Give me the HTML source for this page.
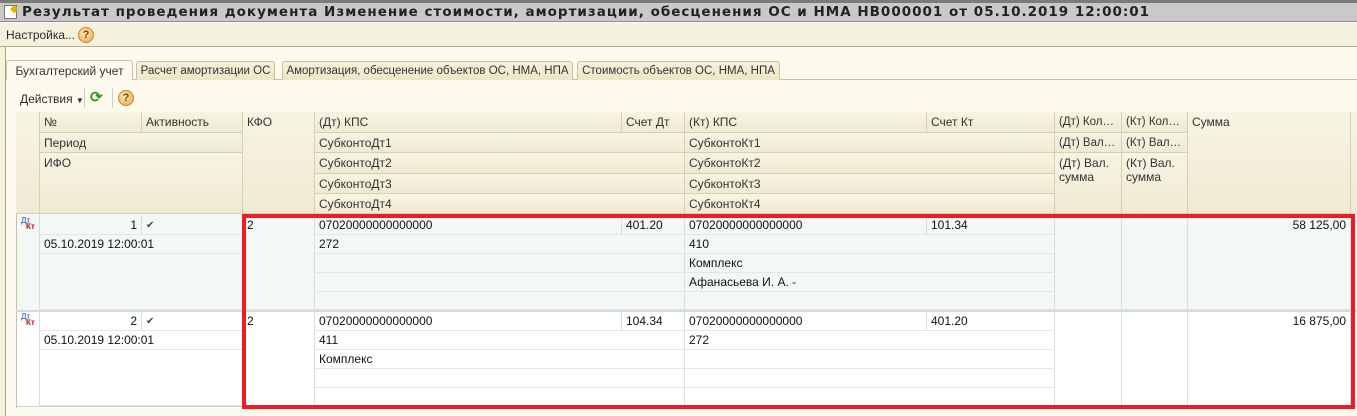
<!DOCTYPE html>
<html><head><meta charset="utf-8"><style>
*{margin:0;padding:0;box-sizing:border-box}
body{width:1357px;height:416px;overflow:hidden;background:#fdfbee;font:12px "Liberation Sans",sans-serif;color:#2a2a2a;position:relative}
.a{position:absolute;white-space:nowrap;overflow:hidden}
.h{position:absolute;background:linear-gradient(#f7f4e3,#efead2);border-right:1px solid #d6cfb4;border-bottom:1px solid #d6cfb4;padding:3px 4px;white-space:nowrap;text-overflow:ellipsis;overflow:hidden;line-height:14px;color:#333}
.w{white-space:normal}
.n{padding:3px 2px 3px 4px;font-size:11.5px}
.d{position:absolute;border-right:1px solid #d9dee4;border-bottom:1px solid #e3e7ea;padding:3px 4px;white-space:nowrap;overflow:hidden;line-height:13px;color:#111}
.r{text-align:right}
.tab{position:absolute;top:61px;height:19px;border:1px solid #c9c1a0;border-bottom:none;border-radius:3px 3px 0 0;background:linear-gradient(#f6f1da,#ece5c8);padding:3px 0 0 0;text-align:center;white-space:nowrap;overflow:hidden;font-size:12px;color:#333}
.q{position:absolute;width:16px;height:16px;border-radius:50%;background:radial-gradient(circle at 40% 35%,#fde7b4,#e8a446);border:1px solid #c58a2f;font:bold 11px "Liberation Sans";color:#7a4b10;text-align:center;line-height:14px}
</style></head><body>
<div class="a" style="left:0;top:0;width:1357px;height:3px;background:#7b7b7b"></div>
<div class="a" style="left:0;top:3px;width:1357px;height:19px;background:#c9c9c9;border-bottom:1px solid #8d8d8d"></div>
<div class="a" style="left:4px;top:5px;width:13px;height:14px;background:#fff;border:1px solid #777"></div>
<div class="a" style="left:10px;top:2px;color:#e9b000;font-size:11px">◆</div>
<div class="a" style="left:22px;top:4px;font:bold 13.5px 'DejaVu Sans',sans-serif;letter-spacing:1px;color:#222;line-height:16px">Результат проведения документа Изменение стоимости, амортизации, обесценения ОС и НМА НВ000001 от 05.10.2019 12:00:01</div>
<div class="a" style="left:0;top:23px;width:1357px;height:24px;background:#f4f1de;border-bottom:1px solid #b7ad8e"></div>
<div class="a" style="left:6px;top:28px">Настройка...</div>
<div class="q" style="left:78px;top:27px">?</div>
<div class="a" style="left:0;top:47px;width:6px;height:369px;background:#f4f1de;border-right:1px solid #a89f80"></div>
<div class="a" style="left:6px;top:79px;width:1351px;height:1px;background:#c9c1a0"></div>
<div class="tab" style="left:6px;width:127px;top:60px;height:20px;background:#fdfbee">Бухгалтерский учет</div>
<div class="tab" style="left:136px;width:139px;font-size:11.5px">Расчет амортизации ОС</div>
<div class="tab" style="left:282px;width:291px;font-size:11.5px">Амортизация, обесценение объектов ОС, НМА, НПА</div>
<div class="tab" style="left:577px;width:203px;font-size:11.5px">Стоимость объектов ОС, НМА, НПА</div>
<div class="a" style="left:20px;top:92px">Действия <span style="font-size:8px">▼</span></div>
<div class="a" style="left:84px;top:88px;width:1px;height:20px;background:#d5ceb2"></div>
<div class="a" style="left:90px;top:88px;color:#2a9a2a;font-size:15px;font-weight:bold">⟳</div>
<div class="a" style="left:112px;top:88px;width:1px;height:20px;background:#d5ceb2"></div>
<div class="q" style="left:118px;top:90px">?</div>
<div class="a" style="left:16px;top:112px;width:1341px;height:296px;background:#fff;border-top:1px solid #c9c1a0;border-left:1px solid #c9c1a0"></div>
<div class="h" style="left:16px;top:112px;width:24px;height:102px"></div>
<div class="h" style="left:40px;top:112px;width:102px;height:21px">№</div>
<div class="h" style="left:142px;top:112px;width:101px;height:21px">Активность</div>
<div class="h" style="left:40px;top:133px;width:203px;height:20px">Период</div>
<div class="h" style="left:40px;top:153px;width:203px;height:61px">ИФО</div>
<div class="h" style="left:243px;top:112px;width:72px;height:102px">КФО</div>
<div class="h" style="left:315px;top:112px;width:307px;height:21px">(Дт) КПС</div>
<div class="h" style="left:622px;top:112px;width:63px;height:21px">Счет Дт</div>
<div class="h" style="left:315px;top:133px;width:370px;height:20px">СубконтоДт1</div>
<div class="h" style="left:315px;top:153px;width:370px;height:21px">СубконтоДт2</div>
<div class="h" style="left:315px;top:174px;width:370px;height:20px">СубконтоДт3</div>
<div class="h" style="left:315px;top:194px;width:370px;height:20px">СубконтоДт4</div>
<div class="h" style="left:685px;top:112px;width:242px;height:21px">(Кт) КПС</div>
<div class="h" style="left:927px;top:112px;width:128px;height:21px">Счет Кт</div>
<div class="h" style="left:685px;top:133px;width:370px;height:20px">СубконтоКт1</div>
<div class="h" style="left:685px;top:153px;width:370px;height:21px">СубконтоКт2</div>
<div class="h" style="left:685px;top:174px;width:370px;height:20px">СубконтоКт3</div>
<div class="h" style="left:685px;top:194px;width:370px;height:20px">СубконтоКт4</div>
<div class="h n" style="left:1055px;top:112px;width:67px;height:21px">(Дт) Коли…</div>
<div class="h n" style="left:1055px;top:133px;width:67px;height:20px">(Дт) Валю…</div>
<div class="h w" style="left:1055px;top:153px;width:67px;height:61px">(Дт) Вал. сумма</div>
<div class="h n" style="left:1122px;top:112px;width:66px;height:21px">(Кт) Коли…</div>
<div class="h n" style="left:1122px;top:133px;width:66px;height:20px">(Кт) Валю…</div>
<div class="h w" style="left:1122px;top:153px;width:66px;height:61px">(Кт) Вал. сумма</div>
<div class="h" style="left:1188px;top:112px;width:163px;height:102px">Сумма</div>
<div class="h" style="left:1351px;top:112px;width:6px;height:102px"></div>
<div class="a" style="left:17px;top:214px;width:1340px;height:96px;background:#f3f8f5"></div>
<div class="a" style="left:17px;top:310px;width:1340px;height:96px;background:#fff"></div>
<div class="a" style="left:21px;top:216px;font-size:8px;color:#1d4fa0">Дт</div>
<div class="a" style="left:26px;top:222px;font-size:8px;font-weight:bold;color:#c01010">Кт</div>
<div class="a" style="left:21px;top:312px;font-size:8px;color:#1d4fa0">Дт</div>
<div class="a" style="left:26px;top:318px;font-size:8px;font-weight:bold;color:#c01010">Кт</div>
<div class="d r" style="left:40px;top:216px;width:102px;height:19px">1</div>
<div class="d" style="left:142px;top:216px;width:101px;height:19px;color:#444;font-size:10px">✔</div>
<div class="d" style="left:40px;top:235px;width:203px;height:19px">05.10.2019 12:00:01</div>
<div class="d" style="left:40px;top:254px;width:203px;height:56px"></div>
<div class="d" style="left:243px;top:216px;width:72px;height:94px">2</div>
<div class="d" style="left:315px;top:216px;width:307px;height:19px">07020000000000000</div>
<div class="d" style="left:622px;top:216px;width:63px;height:19px">401.20</div>
<div class="d" style="left:315px;top:235px;width:370px;height:19px">272</div>
<div class="d" style="left:315px;top:254px;width:370px;height:19px"></div>
<div class="d" style="left:315px;top:273px;width:370px;height:19px"></div>
<div class="d" style="left:315px;top:292px;width:370px;height:18px"></div>
<div class="d" style="left:685px;top:216px;width:242px;height:19px">07020000000000000</div>
<div class="d" style="left:927px;top:216px;width:128px;height:19px">101.34</div>
<div class="d" style="left:685px;top:235px;width:370px;height:19px">410</div>
<div class="d" style="left:685px;top:254px;width:370px;height:19px">Комплекс</div>
<div class="d" style="left:685px;top:273px;width:370px;height:19px">Афанасьева И. А. -</div>
<div class="d" style="left:685px;top:292px;width:370px;height:18px"></div>
<div class="d" style="left:1055px;top:216px;width:67px;height:94px"></div>
<div class="d" style="left:1122px;top:216px;width:66px;height:94px"></div>
<div class="d r" style="left:1188px;top:216px;width:163px;height:94px">58 125,00</div>
<div class="d r" style="left:40px;top:312px;width:102px;height:19px">2</div>
<div class="d" style="left:142px;top:312px;width:101px;height:19px;color:#444;font-size:10px">✔</div>
<div class="d" style="left:40px;top:331px;width:203px;height:19px">05.10.2019 12:00:01</div>
<div class="d" style="left:40px;top:350px;width:203px;height:56px"></div>
<div class="d" style="left:243px;top:312px;width:72px;height:94px">2</div>
<div class="d" style="left:315px;top:312px;width:307px;height:19px">07020000000000000</div>
<div class="d" style="left:622px;top:312px;width:63px;height:19px">104.34</div>
<div class="d" style="left:315px;top:331px;width:370px;height:19px">411</div>
<div class="d" style="left:315px;top:350px;width:370px;height:19px">Комплекс</div>
<div class="d" style="left:315px;top:369px;width:370px;height:19px"></div>
<div class="d" style="left:315px;top:388px;width:370px;height:18px"></div>
<div class="d" style="left:685px;top:312px;width:242px;height:19px">07020000000000000</div>
<div class="d" style="left:927px;top:312px;width:128px;height:19px">401.20</div>
<div class="d" style="left:685px;top:331px;width:370px;height:19px">272</div>
<div class="d" style="left:685px;top:350px;width:370px;height:19px"></div>
<div class="d" style="left:685px;top:369px;width:370px;height:19px"></div>
<div class="d" style="left:685px;top:388px;width:370px;height:18px"></div>
<div class="d" style="left:1055px;top:312px;width:67px;height:94px"></div>
<div class="d" style="left:1122px;top:312px;width:66px;height:94px"></div>
<div class="d r" style="left:1188px;top:312px;width:163px;height:94px">16 875,00</div>
<div class="a" style="left:16px;top:214px;width:24px;height:192px;border-right:1px solid #d9dee4"></div>
<div class="a" style="left:16px;top:310px;width:1341px;height:2px;background:#d4d9df"></div>
<div class="a" style="left:16px;top:406px;width:1341px;height:1px;background:#c8cdd2"></div>
<div class="a" style="left:242px;top:214px;width:1113px;height:195px;border:4px solid #ee1c25"></div>
</body></html>
